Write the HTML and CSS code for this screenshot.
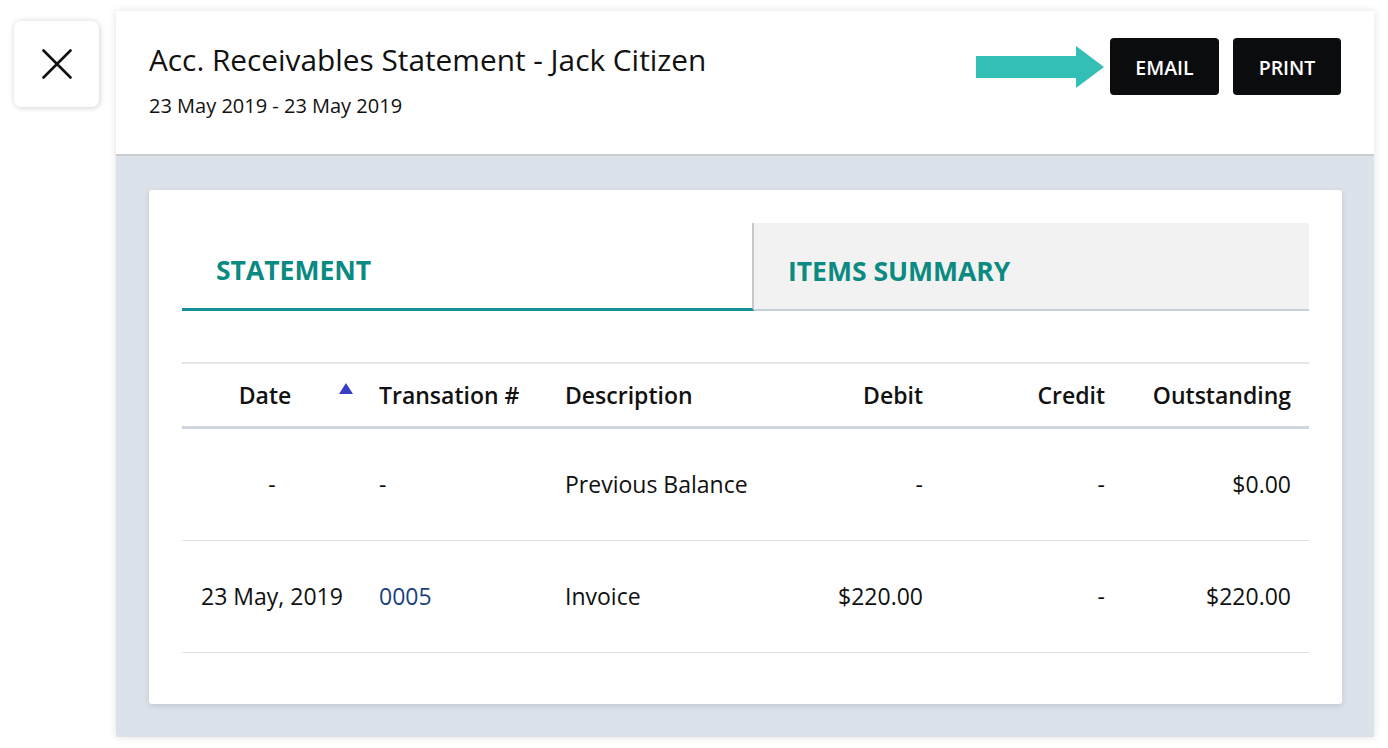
FILE: index.html
```html
<!DOCTYPE html>
<html>
<head>
<meta charset="utf-8">
<link rel="stylesheet" href="styles.css">
</head>
<body>
<div class="page">
  <button class="close-btn" aria-label="Close">
    <svg width="30" height="30" viewBox="0 0 30 30"><path d="M1.5 1.5 L28.5 28.5 M28.5 1.5 L1.5 28.5" stroke="#111" stroke-width="2.6" stroke-linecap="round" fill="none"/></svg>
  </button>
  <div class="panel">
    <header class="head">
      <div class="head-text">
        <h1 class="title">Acc. Receivables Statement - Jack Citizen</h1>
        <div class="range">23 May 2019 - 23 May 2019</div>
      </div>
      <div class="actions">
        <svg class="arrow" width="128" height="42" viewBox="0 0 128 42"><path d="M0 10 H100 V0 L128 21 L100 42 V32 H0 Z" fill="#33bfb6"/></svg>
        <button class="btn">EMAIL</button>
        <button class="btn">PRINT</button>
      </div>
    </header>
    <main class="body">
      <section class="card">
        <div class="tabs">
          <div class="tab active">STATEMENT</div>
          <div class="tab">ITEMS SUMMARY</div>
        </div>
        <div class="table">
          <div class="row thead">
            <div class="c c-date">Date<span class="sort"></span></div>
            <div class="c c-left">Transation #</div>
            <div class="c c-left">Description</div>
            <div class="c c-right">Debit</div>
            <div class="c c-right">Credit</div>
            <div class="c c-right">Outstanding</div>
          </div>
          <div class="row">
            <div class="c c-date">-</div>
            <div class="c c-left">-</div>
            <div class="c c-left">Previous Balance</div>
            <div class="c c-right">-</div>
            <div class="c c-right">-</div>
            <div class="c c-right">$0.00</div>
          </div>
          <div class="row">
            <div class="c c-date">23 May, 2019</div>
            <div class="c c-left"><a class="link" href="#">0005</a></div>
            <div class="c c-left">Invoice</div>
            <div class="c c-right">$220.00</div>
            <div class="c c-right">-</div>
            <div class="c c-right">$220.00</div>
          </div>
        </div>
      </section>
    </main>
  </div>
</div>
</body>
</html>
```

FILE: styles.css
```css
* { box-sizing: border-box; }
html, body { margin: 0; padding: 0; background: #fff; }
body { font-family: "Open Sans", "Noto Sans", sans-serif; color: #111; }

.page {
  display: flex;
  align-items: flex-start;
  padding: 11px 0 0 14px;
  width: 1388px;
  height: 748px;
}

.close-btn {
  width: 85px;
  height: 86px;
  margin-top: 10px;
  border: none;
  border-radius: 7px;
  background: #fff;
  box-shadow: 0 0 6px rgba(0,0,0,0.14), 2px 2px 5px rgba(0,0,0,0.06);
  display: flex;
  align-items: center;
  justify-content: center;
  padding: 0;
}

.panel {
  margin-left: 17px;
  width: 1258px;
  height: 726px;
  display: flex;
  flex-direction: column;
  box-shadow: 0 0 8px rgba(0,0,0,0.12);
  background: #dce2ea;
}

.head {
  height: 145px;
  background: #fff;
  border-bottom: 2px solid #c9cdd2;
  display: flex;
  justify-content: space-between;
  align-items: flex-start;
  padding: 27px 33px 0 33px;
}

.title {
  margin: 0;
  font-size: 29.8px;
  font-weight: 400;
  line-height: 1;
  padding-top: 7px;
}
.range {
  margin-top: 21px;
  font-size: 20px;
  line-height: 1;
}

.actions {
  display: flex;
  align-items: center;
  gap: 14px;
}
.arrow { margin-right: -8px; margin-top: 1px; }
.btn {
  height: 57px;
  background: #0b0c0e;
  color: #fff;
  border: none;
  border-radius: 4px;
  font-family: "Open Sans", sans-serif;
  font-weight: 600;
  font-size: 19.5px;
  padding: 2px 0 0;
}
.btn:first-of-type { width: 109px; }
.btn:last-of-type { width: 108px; }

.body {
  flex: 1;
  padding: 34px 32px 0 33px;
}

.card {
  background: #fff;
  height: 514px;
  border-radius: 3px;
  box-shadow: 0 2px 6px rgba(0,0,0,0.12);
  padding: 33px 33px 0 33px;
}

.tabs {
  display: flex;
  height: 88px;
}
.tab {
  display: flex;
  align-items: center;
  font-weight: 700;
  font-size: 26.5px;
  color: #0a8a80;
}
.tab.active {
  width: 572px;
  padding-left: 34px;
  padding-top: 9px;
  border-bottom: 3px solid #138f9c;
  border-right: 2px solid #c4c7cb;
}
.tab:not(.active) {
  flex: 1;
  background: #f2f2f2;
  padding-left: 34px;
  padding-top: 9px;
  border-bottom: 2px solid #c7d0da;
}

.table {
  margin-top: 51px;
  border-top: 2px solid #e3e6ea;
}
.row {
  display: grid;
  grid-template-columns: 180px 186px 212px 180px 182px 186px;
  height: 112px;
  border-bottom: 1px solid #dde2e8;
  align-items: center;
  font-size: 23px;
  padding-bottom: 1px;
}
.row.thead {
  height: 65px;
  border-bottom: 3px solid #cfd6df;
  font-weight: 600;
  padding-bottom: 1px;
}
.c { padding: 0 17px; white-space: nowrap; }
.c-date { text-align: center; position: relative; padding: 0; }
.thead .c-date { padding-right: 14px; }
.c-left { text-align: left; }
.c-right { text-align: right; }

.sort {
  position: absolute;
  left: 157px;
  top: 4px;
  width: 0;
  height: 0;
  border-left: 7px solid transparent;
  border-right: 7px solid transparent;
  border-bottom: 11px solid #3a3ec4;
}

.link { color: #1c3f82; text-decoration: none; }
```
